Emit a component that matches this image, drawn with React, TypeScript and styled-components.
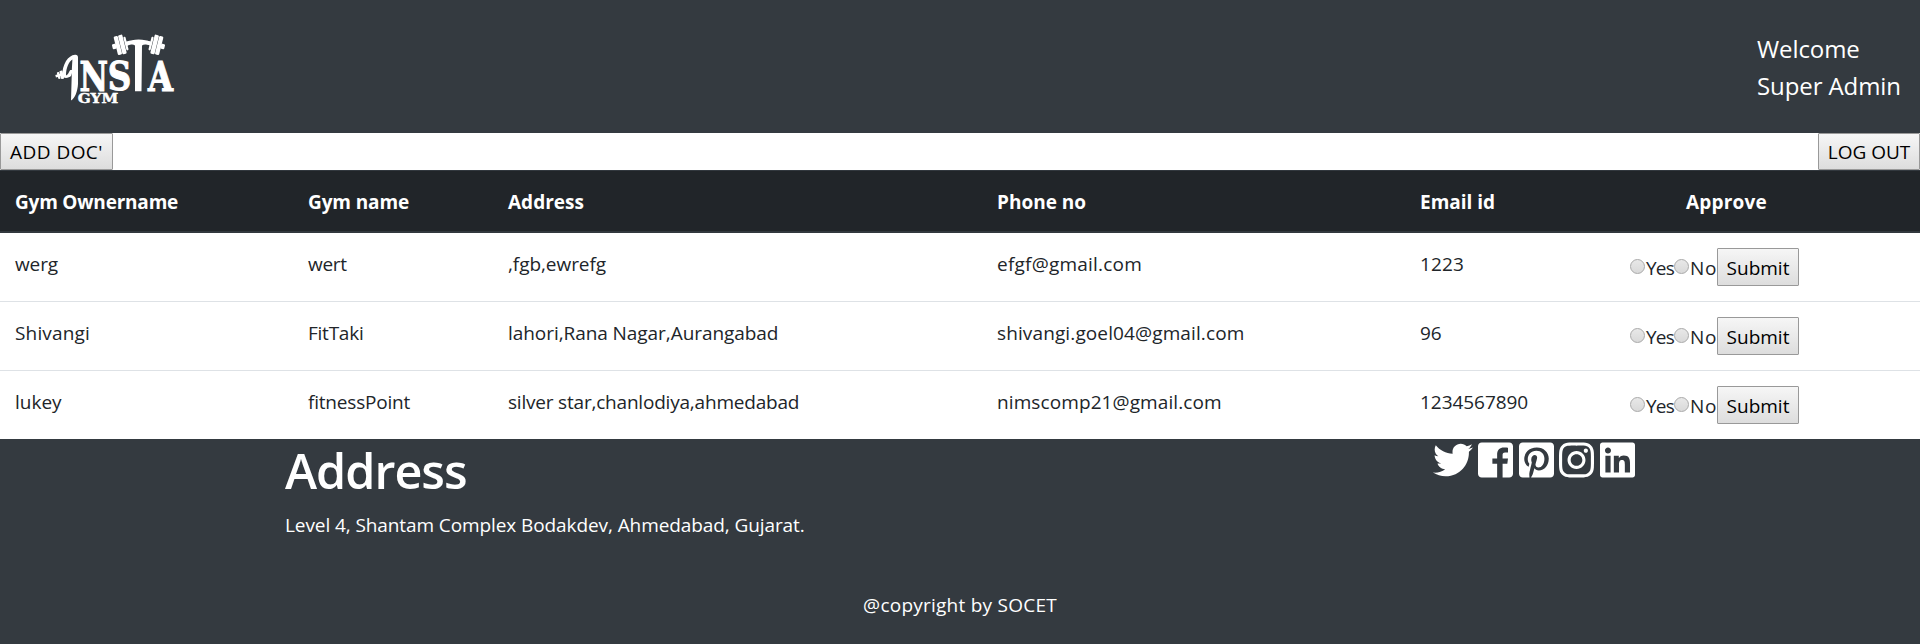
import React from 'react';
import styled, { createGlobalStyle } from 'styled-components';
import { FaInstagram, FaLinkedin, FaPinterestSquare, FaTwitter } from 'react-icons/fa';

const GlobalStyle = createGlobalStyle`
  *, *::before, *::after { box-sizing: border-box; }
  body {
    margin: 0;
    background: #fff;
    color: #212529;
    font-family: "Open Sans", "Noto Sans", sans-serif;
    font-size: 19px;
    line-height: 30px;
  }
`;

const Tracked = styled.span<{ $spacing?: number }>`
  letter-spacing: ${({ $spacing = 0 }) => $spacing}px;
`;

const Page = styled.div`
  min-height: 644px;
  display: flex;
  flex-direction: column;
`;

const Header = styled.header`
  display: flex;
  justify-content: space-between;
  align-items: flex-start;
  height: 133px;
  padding: 20px 0 0 40px;
  background: #343a40;
`;

const LogoArt = styled.svg`
  display: block;
  width: 150px;
  height: 95px;
  fill: #fff;
  font-family: "DejaVu Serif", serif;
  font-weight: 700;
`;

const LogoLetter = styled.text`
  stroke: #fff;
  stroke-width: 1.1px;
`;

const Welcome = styled.div`
  width: 163px;
  padding-top: 10px;
  color: #fff;
  font-size: 24px;
  line-height: 37px;
  letter-spacing: -0.1px;
  white-space: nowrap;
`;

const ActionBar = styled.nav`
  display: flex;
  justify-content: space-between;
  height: 37px;
`;

const Button = styled.button<{ $width: number; $height: number; $spacing?: number; $drop?: number }>`
  width: ${({ $width }) => $width}px;
  height: ${({ $height }) => $height}px;
  padding: ${({ $drop = 0 }) => $drop}px 0 0;
  border: 1px solid #999;
  border-radius: 1px;
  background: linear-gradient(#f6f6f6, #dddddd);
  color: #000;
  font: inherit;
  letter-spacing: ${({ $spacing = 0 }) => $spacing}px;
  white-space: nowrap;
`;

const Table = styled.table`
  width: 100%;
  table-layout: fixed;
  border-collapse: separate;
  border-spacing: 0;
`;

const HeadCell = styled.th<{ $indent?: number }>`
  height: 63px;
  padding: 2px 0 0 ${({ $indent = 15 }) => $indent}px;
  border-top: 1px solid #32383e;
  border-bottom: 2px solid #32383e;
  background: #212529;
  color: #fff;
  font-weight: 700;
  text-align: left;
`;

const Row = styled.tr`
  height: 69px;
  &:first-child { height: 68px; }
  &:first-child > td { border-top: 0; }
`;

const Cell = styled.td`
  padding: 16px 0 0 15px;
  border-top: 1px solid #dee2e6;
  vertical-align: top;
  white-space: nowrap;
`;

const ApprovalCell = styled(Cell)`
  padding-top: 15px;
`;

const Approval = styled.form`
  display: flex;
  align-items: center;
  height: 38px;
`;

const Choice = styled.label<{ $width: number }>`
  display: flex;
  align-items: center;
  width: ${({ $width }) => $width}px;
`;

const ChoiceText = styled(Tracked)`
  padding-top: 2px;
`;

const Radio = styled.input`
  appearance: none;
  flex: none;
  width: 15px;
  height: 15px;
  margin: 0 1px 1px 1px;
  border: 1px solid #a9a9a9;
  border-radius: 50%;
  background: linear-gradient(#e8e8e8, #d9d9d9);
`;

const Footer = styled.footer`
  flex: 1;
  display: flex;
  flex-direction: column;
  background: #343a40;
  color: #fff;
`;

const FooterTop = styled.div`
  display: flex;
  justify-content: space-between;
  height: 151px;
  padding: 0 285px;
`;

const FooterTitle = styled.h1`
  margin: 1px 0 10px;
  font-size: 48.5px;
  font-weight: 600;
  line-height: 60px;
  letter-spacing: -1px;
`;

const FooterText = styled.p`
  margin: 0;
  letter-spacing: -0.09px;
`;

const Social = styled.div`
  display: flex;
  align-items: flex-start;
  gap: 5.6px;
  padding-top: 1px;
`;

const SocialLink = styled.a<{ $wide?: boolean }>`
  display: flex;
  width: ${({ $wide }) => ($wide ? 40 : 35)}px;
  height: 40px;
  color: #fff;
  svg { width: 100%; height: 100%; }
`;

const Copyright = styled.div`
  text-align: center;
  letter-spacing: 0.24px;
`;

function Plates() {
  return (
    <g>
      <rect x="-8.5" y="-9.5" width="4.3" height="19" rx="1.2" />
      <rect x="-3.9" y="-9.8" width="4.4" height="19.6" rx="1.2" />
      <rect x="0.9" y="-7" width="2.2" height="14" rx="1" />
      <rect x="-12" y="-2.6" width="4" height="5.2" rx="1" />
      <rect x="2" y="-1.8" width="5" height="3.6" />
    </g>
  );
}

function Logo() {
  return (
    <LogoArt viewBox="0 0 150 95" role="img" aria-label="Insta Gym">
      <path
        fillRule="evenodd"
        d="M35 34.8 C28 35.5 22.5 44 22 56 C24 59 29 58 31 56 L31.8 53 L31 80.5 C35 78.5 37.6 71 38 64 L38 37.5 C38 35.5 37 34.6 35 34.8 Z M32.4 39.5 L31.8 50 L30.4 50 C29 51 28.4 55 26 55.4 C26 48 28.8 41.5 32.4 39.5 Z"
      />
      <g transform="rotate(-14 21 55)">
        <rect x="15.5" y="53.6" width="8" height="2.6" />
        <rect x="17.5" y="51.4" width="2.4" height="7" rx=".8" />
        <rect x="20.3" y="50.8" width="3" height="8.4" rx=".8" />
      </g>
      <LogoLetter x="39.5" y="70.6" fontSize="41.5" textLength="28.5" lengthAdjust="spacingAndGlyphs">N</LogoLetter>
      <LogoLetter x="67.8" y="70.2" fontSize="40" textLength="23.5" lengthAdjust="spacingAndGlyphs">S</LogoLetter>
      <path d="M86 22.5 C93 18.6 104 18.6 112 22.5 L111 26 C107 24.4 104 24 102 25.5 L101.5 71.3 H95 V25.5 C93 24 90.5 24.4 87 26 Z" />
      <g transform="translate(84 24) rotate(-14)"><Plates /></g>
      <g transform="translate(113 24) scale(-1 1) rotate(-14)"><Plates /></g>
      <LogoLetter x="108" y="70.6" fontSize="41.5" textLength="25" lengthAdjust="spacingAndGlyphs">A</LogoLetter>
      <text x="37.7" y="83" fontSize="12" stroke="#fff" strokeWidth=".4" textLength="40.5" lengthAdjust="spacingAndGlyphs">GYM</text>
    </LogoArt>
  );
}

function FacebookSquare() {
  return (
    <svg viewBox="0 0 448 512" fill="currentColor">
      <path d="M448 80v352c0 26.5-21.5 48-48 48h-85.3V302.8h60.6l8.7-67.6h-69.3V192c0-19.6 5.4-32.9 33.5-32.9H384V98.7c-6.2-.8-27.4-2.7-52.2-2.7-51.6 0-87 31.5-87 89.4v49.9H184v67.6h60.9V480H48c-26.5 0-48-21.5-48-48V80c0-26.5 21.5-48 48-48h352c26.5 0 48 21.5 48 48z" />
    </svg>
  );
}

type Entry = [text: string, spacing: number];

const columnWidths = [293, 200, 489, 423, 209];

const headings: Entry[] = [
  ['Gym Ownername', -0.2],
  ['Gym name', -0.12],
  ['Address', 0],
  ['Phone no', 0],
  ['Email id', 0],
];

const gyms: Entry[][] = [
  [['werg', -0.1], ['wert', -0.3], [',fgb,ewrefg', -0.06], ['efgf@gmail.com', 0.22], ['1223', 0.1]],
  [['Shivangi', 0.16], ['FitTaki', -0.25], ['lahori,Rana Nagar,Aurangabad', -0.06], ['shivangi.goel04@gmail.com', 0.12], ['96', 0]],
  [['lukey', 0], ['fitnessPoint', -0.2], ['silver star,chanlodiya,ahmedabad', -0.2], ['nimscomp21@gmail.com', 0.1], ['1234567890', -0.05]],
];

export default function App() {
  return (
    <Page>
      <GlobalStyle />
      <Header>
        <Logo />
        <Welcome>
          Welcome
          <br />
          Super Admin
        </Welcome>
      </Header>
      <ActionBar>
        <Button $width={113} $height={37} $spacing={0.45}>ADD DOC'</Button>
        <Button $width={102} $height={37}>LOG OUT</Button>
      </ActionBar>
      <Table>
        <colgroup>
          {columnWidths.map((width, i) => <col key={i} width={width} />)}
          <col />
        </colgroup>
        <thead>
          <tr>
            {headings.map(([text, spacing]) => (
              <HeadCell key={text}><Tracked $spacing={spacing}>{text}</Tracked></HeadCell>
            ))}
            <HeadCell $indent={72}><Tracked $spacing={0.2}>Approve</Tracked></HeadCell>
          </tr>
        </thead>
        <tbody>
          {gyms.map((gym, i) => (
            <Row key={i}>
              {gym.map(([text, spacing]) => (
                <Cell key={text}><Tracked $spacing={spacing}>{text}</Tracked></Cell>
              ))}
              <ApprovalCell>
                <Approval onSubmit={(e) => e.preventDefault()}>
                  <Choice $width={44}>
                    <Radio type="radio" name="approve" value="yes" />
                    <ChoiceText $spacing={-0.8}>Yes</ChoiceText>
                  </Choice>
                  <Choice $width={44}>
                    <Radio type="radio" name="approve" value="no" />
                    <ChoiceText $spacing={0.7}>No</ChoiceText>
                  </Choice>
                  <Button $width={82} $height={38} $drop={2}>Submit</Button>
                </Approval>
              </ApprovalCell>
            </Row>
          ))}
        </tbody>
      </Table>
      <Footer>
        <FooterTop>
          <div>
            <FooterTitle>Address</FooterTitle>
            <FooterText>Level 4, Shantam Complex Bodakdev, Ahmedabad, Gujarat.</FooterText>
          </div>
          <Social>
            <SocialLink $wide aria-label="Twitter"><FaTwitter /></SocialLink>
            <SocialLink aria-label="Facebook"><FacebookSquare /></SocialLink>
            <SocialLink aria-label="Pinterest"><FaPinterestSquare /></SocialLink>
            <SocialLink aria-label="Instagram"><FaInstagram /></SocialLink>
            <SocialLink aria-label="LinkedIn"><FaLinkedin /></SocialLink>
          </Social>
        </FooterTop>
        <Copyright>@copyright by SOCET</Copyright>
      </Footer>
    </Page>
  );
}
